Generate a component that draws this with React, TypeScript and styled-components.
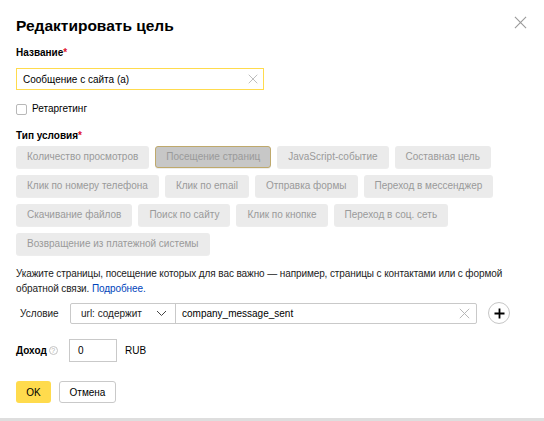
import React from 'react';
import styled, { createGlobalStyle } from 'styled-components';

const GlobalStyle = createGlobalStyle`
  html, body {
    margin: 0;
    padding: 0;
    background: #fff;
  }

  body {
    font-family: 'Liberation Sans', Arial, sans-serif;
    font-size: 10px;
    color: #000;
  }
`;

const goalTypes = [
  'Количество просмотров',
  'Посещение страниц',
  'JavaScript-событие',
  'Составная цель',
  'Клик по номеру телефона',
  'Клик по email',
  'Отправка формы',
  'Переход в мессенджер',
  'Скачивание файлов',
  'Поиск по сайту',
  'Клик по кнопке',
  'Переход в соц. сеть',
  'Возвращение из платежной системы',
];

const selectedType = 'Посещение страниц';

const CrossIcon = ({ size, color }: { size: number; color: string }) => (
  <svg width={size} height={size} viewBox='0 0 14 14'>
    <path d='M1 1L13 13M13 1L1 13' stroke={color} strokeWidth='1.2' fill='none' />
  </svg>
);

const ChevronIcon = () => (
  <svg width='11' height='7' viewBox='0 0 11 7'>
    <path d='M1 1L5.5 5.5L10 1' stroke='#444' strokeWidth='1' fill='none' />
  </svg>
);

const PlusIcon = () => (
  <svg width='11' height='11' viewBox='0 0 11 11'>
    <path d='M5.5 0.5V10.5M0.5 5.5H10.5' stroke='#000' strokeWidth='1.8' fill='none' />
  </svg>
);

export default function App() {
  return (
    <>
      <GlobalStyle />
      <Modal>
        <Header>
          <Title>Редактировать цель</Title>
          <CloseButton aria-label='Закрыть'>
            <CrossIcon size={13} color='#9a9a9a' />
          </CloseButton>
        </Header>

        <FieldLabel $gap={8}>
          Название<Required>*</Required>
        </FieldLabel>
        <NameInput>
          <InputText>Сообщение с сайта (а)</InputText>
          <CrossIcon size={10} color='#b3b3b3' />
        </NameInput>

        <CheckRow>
          <CheckBox />
          <span>Ретаргетинг</span>
        </CheckRow>

        <FieldLabel $gap={15}>
          Тип условия<Required>*</Required>
        </FieldLabel>
        <TypeList>
          {goalTypes.map((type) => (
            <TypeButton key={type} $checked={type === selectedType}>
              {type}
            </TypeButton>
          ))}
        </TypeList>

        <Hint>
          Укажите страницы, посещение которых для вас важно — например, страницы
          с контактами или с формой обратной связи.{' '}
          <HintLink>Подробнее.</HintLink>
        </Hint>

        <ConditionRow>
          <RowLabel>Условие</RowLabel>
          <ConditionGroup>
            <SelectBox>
              <span>url: содержит</span>
              <ChevronIcon />
            </SelectBox>
            <ValueBox>
              <span>company_message_sent</span>
              <CrossIcon size={11} color='#b3b3b3' />
            </ValueBox>
          </ConditionGroup>
          <AddButton aria-label='Добавить'>
            <PlusIcon />
          </AddButton>
        </ConditionRow>

        <IncomeRow>
          <IncomeLabel>
            Доход
            <HelpMark>?</HelpMark>
          </IncomeLabel>
          <IncomeInput>0</IncomeInput>
          <Currency>RUB</Currency>
        </IncomeRow>

        <Actions>
          <PrimaryButton>OK</PrimaryButton>
          <SecondaryButton>Отмена</SecondaryButton>
        </Actions>
      </Modal>
      <Footer />
    </>
  );
}

const Modal = styled.div`
  display: flex;
  flex-direction: column;
  align-items: flex-start;
  height: 418px;
  box-sizing: border-box;
  padding: 13px 16px 0 16px;
  background: #fff;
`;

const Header = styled.div`
  display: flex;
  align-items: flex-start;
  justify-content: space-between;
  align-self: stretch;
`;

const Title = styled.h2`
  margin: 0;
  font-family: 'Liberation Sans Narrow', 'Liberation Sans', Arial, sans-serif;
  font-size: 15.5px;
  line-height: 26px;
  font-weight: 700;
  color: #000;
`;

const CloseButton = styled.button`
  display: flex;
  padding: 0;
  margin: 3px 1px 0 0;
  border: none;
  background: none;
`;

const FieldLabel = styled.div<{ $gap: number }>`
  margin-top: ${(p) => p.$gap}px;
  font-size: 10px;
  line-height: 12px;
  font-weight: 700;
  color: #000;
`;

const Required = styled.span`
  color: #e0102a;
`;

const NameInput = styled.div`
  display: flex;
  align-items: center;
  justify-content: space-between;
  box-sizing: border-box;
  width: 248px;
  height: 22px;
  margin-top: 9px;
  padding: 0 5px 0 6px;
  border: 1px solid #ffdb4d;
`;

const InputText = styled.span`
  color: #000;
`;

const CheckRow = styled.div`
  display: flex;
  align-items: center;
  gap: 5px;
  margin-top: 13px;
  line-height: 12px;
  color: #000;
`;

const CheckBox = styled.span`
  display: block;
  box-sizing: border-box;
  width: 11px;
  height: 11px;
  border: 1px solid #b8b8b8;
  border-radius: 2px;
`;

const TypeList = styled.div`
  display: flex;
  flex-wrap: wrap;
  gap: 7px 6px;
  margin-top: 4px;
  width: 500px;
`;

const TypeButton = styled.div<{ $checked: boolean }>`
  box-sizing: border-box;
  height: 22px;
  padding: 0 10px;
  border: 1px solid ${(p) => (p.$checked ? '#bfa96c' : 'transparent')};
  border-radius: 3px;
  background: ${(p) => (p.$checked ? '#c7c7c7' : '#ebebeb')};
  box-shadow: 0 1px 0 rgba(0, 0, 0, 0.07);
  color: #9a9a9a;
  line-height: 20px;
  white-space: nowrap;
`;

const Hint = styled.p`
  margin: 11px 0 0 0;
  width: 500px;
  line-height: 15px;
  letter-spacing: -0.1px;
  color: #222;
`;

const HintLink = styled.a`
  color: #0044bb;
  text-decoration: none;
`;

const ConditionRow = styled.div`
  display: flex;
  align-items: center;
  margin-top: 6px;
`;

const RowLabel = styled.span`
  box-sizing: border-box;
  width: 54px;
  padding-left: 4px;
  color: #222;
`;

const ConditionGroup = styled.div`
  display: flex;
  box-sizing: border-box;
  height: 21px;
  border: 1px solid #c9c9c9;
  border-radius: 2px;
`;

const SelectBox = styled.div`
  display: flex;
  align-items: center;
  justify-content: space-between;
  box-sizing: border-box;
  width: 105px;
  padding: 0 8px 0 10px;
  border-right: 1px solid #c9c9c9;
  color: #222;
`;

const ValueBox = styled.div`
  display: flex;
  align-items: center;
  justify-content: space-between;
  box-sizing: border-box;
  width: 300px;
  padding: 0 6px;
  color: #000;
`;

const AddButton = styled.button`
  display: flex;
  align-items: center;
  justify-content: center;
  box-sizing: border-box;
  width: 22px;
  height: 22px;
  margin-left: 11px;
  padding: 0;
  border: 1px solid #c6c6c6;
  border-radius: 50%;
  background: #fff;
`;

const IncomeRow = styled.div`
  display: flex;
  align-items: center;
  margin-top: 15px;
`;

const IncomeLabel = styled.span`
  display: flex;
  align-items: center;
  gap: 2px;
  width: 53px;
  font-weight: 700;
  color: #000;
`;

const HelpMark = styled.span`
  display: inline-flex;
  align-items: center;
  justify-content: center;
  box-sizing: border-box;
  width: 9px;
  height: 9px;
  border: 1px solid #c4c4c4;
  border-radius: 50%;
  color: #b0b0b0;
  font-size: 7px;
  font-weight: 400;
`;

const IncomeInput = styled.div`
  box-sizing: border-box;
  width: 48px;
  height: 23px;
  padding: 0 8px;
  border: 1px solid #c9c9c9;
  line-height: 21px;
  color: #000;
`;

const Currency = styled.span`
  margin-left: 8px;
  color: #000;
`;

const Actions = styled.div`
  display: flex;
  gap: 8px;
  margin-top: 19px;
`;

const PrimaryButton = styled.button`
  box-sizing: border-box;
  width: 35px;
  height: 22px;
  padding: 0;
  border: none;
  border-radius: 3px;
  background: #ffdb4d;
  font-family: inherit;
  font-size: 10px;
  color: #000;
`;

const SecondaryButton = styled.button`
  box-sizing: border-box;
  width: 57px;
  height: 22px;
  padding: 0;
  border: 1px solid #c9c9c9;
  border-radius: 3px;
  background: #fff;
  font-family: inherit;
  font-size: 10px;
  color: #000;
`;

const Footer = styled.div`
  height: 3px;
  background: #dedede;
`;
